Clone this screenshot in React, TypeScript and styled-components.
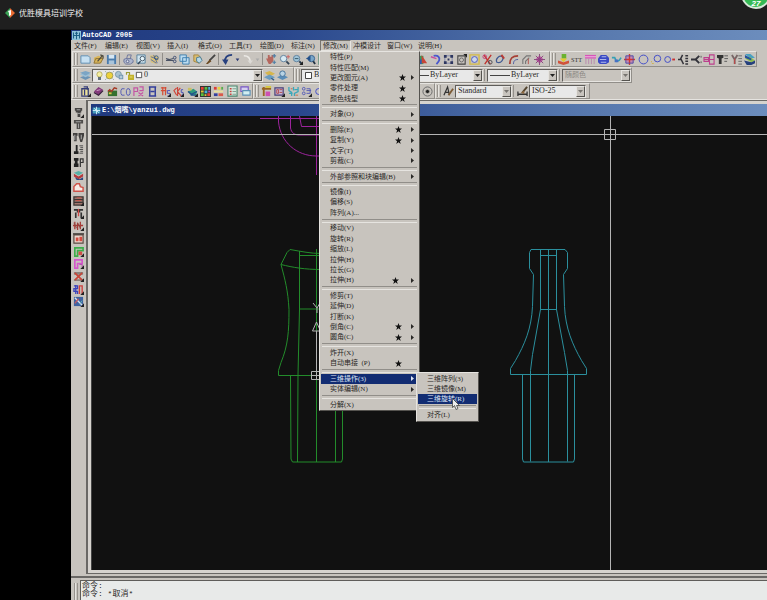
import React from "react";
import styled, { createGlobalStyle, css } from "styled-components";

const face = "#c8c4be";
const shade = "#77746f";
const light = "#e6e4e0";
const navy = "#122c72";
const songti = '"Liberation Serif", "Noto Sans CJK SC", serif';
const fixed = '"Liberation Mono", "Noto Sans CJK SC", monospace';

const GlobalStyle = createGlobalStyle`
  * { box-sizing: border-box; }
  body { margin: 0; background: #000; }
  button, select { font: inherit; color: inherit; border: 0; padding: 0; margin: 0; background: none; border-radius: 0; }
  ul { list-style: none; margin: 0; padding: 0; }
  svg { display: block; flex: none; }
`;

const Page = styled.div`
  display: flex;
  flex-direction: column;
  min-height: 100vh;
  overflow: hidden;
  background: #000;
  color: #2a2826;
  font: 7px/10px ${songti};
`;

const SchoolHeader = styled.header`
  position: relative;
  display: flex;
  align-items: center;
  gap: 4px;
  height: 30px;
  padding: 0 5px 4px;
  background: #1f1f1f;
  border-bottom: 1px solid #141414;
  color: #eee;
  font: 8px/12px "Noto Sans CJK SC", sans-serif;
`;

const Badge = styled.span`
  position: absolute;
  top: -21px;
  right: -4px;
  width: 30px;
  height: 30px;
  padding-top: 19px;
  border: 2px solid #d8e8da;
  border-radius: 50%;
  background: #35b954;
  color: #fff;
  text-align: center;
  font: italic bold 8px/7px "Liberation Sans", sans-serif;
`;

const AppWindow = styled.main`
  flex: 1;
  display: flex;
  flex-direction: column;
  margin-left: 71px;
  background: ${face};
`;

const TitleBar = styled.div<{ $tall?: boolean }>`
  display: flex;
  align-items: center;
  gap: 1px;
  flex: none;
  height: ${(p) => (p.$tall ? 12 : 10)}px;
  padding-left: 1px;
  background: linear-gradient(90deg, #20397e 0%, #29478c 30%, #5475ab 70%, #6c8dbd 100%);
  color: #fff;
  font: bold 7px/10px ${fixed};
  white-space: pre;
`;

const MenuBar = styled.ul`
  display: flex;
  height: 11px;
  padding-left: 1px;
`;

const MenuSlot = styled.li<{ $wide?: boolean }>`
  position: relative;
  width: ${(p) => (p.$wide ? 34 : 31)}px;
`;

const MenuButton = styled.button<{ $open?: boolean }>`
  width: 100%;
  height: 11px;
  padding-left: 1px;
  border: 1px solid transparent;
  text-align: left;
  white-space: nowrap;
  line-height: 10px;
  ${(p) => p.$open && css`border-color: ${shade} ${light} ${light} ${shade}; padding-left: 2px;`}
`;

const Dropdown = styled.ul<{ $sub?: boolean }>`
  position: absolute;
  z-index: 5;
  display: flex;
  flex-direction: column;
  background: ${face};
  color: #2a2826;
  border: 1px solid;
  border-color: ${light} #55534f #55534f ${light};
  ${(p) => p.$sub
    ? css`top: -2px; left: 96px; width: 63px; height: 50px; padding: 1px 0;`
    : css`top: 11px; left: -1px; width: 101px; height: 360px;`}
`;

const ItemSlot = styled.li`
  position: relative;
  flex: 2 1 0;
  min-height: 0;
  display: flex;
`;

const ItemButton = styled.button<{ $active?: boolean; $sub?: boolean }>`
  flex: 1;
  display: flex;
  align-items: center;
  margin: 0 1px;
  padding: 0 3px 0 9px;
  text-align: left;
  white-space: pre;
  line-height: 10px;
  ${(p) => p.$active && css`background: ${navy}; color: #dfe5f5;`}
`;

const ItemLabel = styled.span`
  flex: 1;
`;

const StarSlot = styled.span<{ $gap: number }>`
  margin-right: ${(p) => p.$gap}px;
`;

const ArrowSlot = styled.span`
  width: 4px;
`;

const Divider = styled.li`
  flex: 1 1 0;
  min-height: 0;
  display: flex;
  align-items: center;
  padding: 0 2px;
  &::before {
    content: "";
    flex: 1;
    height: 2px;
    border-top: 1px solid #918e89;
    border-bottom: 1px solid ${light};
  }
`;

const PointerMark = styled.svg`
  position: absolute;
  left: 35px;
  top: 4px;
  z-index: 6;
`;

const ToolRow = styled.div`
  display: flex;
  height: 16px;
  padding-left: 1px;
`;

const ToolBar = styled.div<{ $w?: number }>`
  display: flex;
  align-items: center;
  flex: none;
  ${(p) => p.$w && css`width: ${p.$w}px;`}
  border: 1px solid;
  border-color: ${light} #918e89 #918e89 ${light};
`;

const Grip = styled.span`
  flex: none;
  width: 4px;
  height: 12px;
  margin: 0 1px;
  border: solid #97938d;
  border-width: 0 1px;
  box-shadow: inset 1px 0 ${light};
`;

const Tools = styled.div<{ $spread?: boolean }>`
  flex: 1;
  display: flex;
  align-items: center;
  justify-content: ${(p) => (p.$spread ? "space-between" : "flex-start")};
`;

const ToolButton = styled.button<{ $narrow?: boolean }>`
  flex: none;
  display: flex;
  align-items: center;
  justify-content: center;
  width: ${(p) => (p.$narrow ? 7 : 13)}px;
  height: 12px;
`;

const Rule = styled.span`
  flex: none;
  width: 1px;
  height: 12px;
  margin: 0 2px 0 1px;
  background: #918e89;
`;

const ComboFrame = styled.label<{ $w: number; $off?: boolean }>`
  flex: none;
  display: flex;
  align-items: center;
  gap: 1px;
  width: ${(p) => p.$w}px;
  height: 13px;
  padding-left: 2px;
  border: 1px solid;
  border-color: #5f5d5a ${light} ${light} #5f5d5a;
  background: ${(p) => (p.$off ? face : "#e8e8e8")};
  color: ${(p) => (p.$off ? "#8a8782" : "#2a2826")};
`;

const ComboSelect = styled.select<{ $cjk?: boolean }>`
  flex: 1;
  min-width: 0;
  appearance: none;
  outline: 0;
  opacity: 1;
  font-size: ${(p) => (p.$cjk ? 7 : 8)}px;
  line-height: 10px;
`;

const ComboArrow = styled.span`
  display: flex;
  align-items: center;
  justify-content: center;
  width: 9px;
  height: 11px;
  background: ${face};
  border: 1px solid;
  border-color: ${light} #55534f #55534f ${light};
`;

const Workspace = styled.div`
  flex: 1;
  display: flex;
  border-top: 1px solid ${light};
`;

const SideBar = styled.nav`
  display: flex;
  flex-direction: column;
  align-items: center;
  justify-content: space-between;
  width: 15px;
  height: 202px;
  margin-top: 6px;
`;

const Doc = styled.section`
  flex: 1;
  min-width: 0;
  display: flex;
  flex-direction: column;
  padding: 3px 0 3px 3px;
  border: solid #6a6865;
  border-width: 1px 0 1px 2px;
  background: #d6d3ce;
`;

const Canvas = styled.div`
  flex: 1;
  overflow: hidden;
  background: #111;
  border-left: 1px solid #444;
`;

const Drawing = styled.svg`
  width: 100%;
  height: 100%;
  min-height: 454px;
`;

const CommandDock = styled.footer`
  display: flex;
  height: 25px;
  padding: 2px 0 0 2px;
`;

const CommandGrip = styled(Grip)`
  height: 20px;
  margin: 3px 2px 0 1px;
`;

const DockEdge = styled.div`
  height: 2px;
  margin-top: 2px;
  background: #6a6865;
`;

const CommandLog = styled.pre`
  flex: 1;
  margin: 0;
  padding: 1px 0 0 1px;
  border: solid #5f5d5a;
  border-width: 1px 0 0 1px;
  background: #e8eae9;
  font: 8px/8px ${fixed};
  overflow: hidden;
`;

const S = (d: string, stroke: string, w = 1, fill = "none") => (
  <path d={d} stroke={stroke} strokeWidth={w} fill={fill} />
);
const F = (d: string, fill: string) => <path d={d} fill={fill} />;
const C = (x: number, y: number, r: number, stroke: string, fill = "none") => (
  <circle cx={x} cy={y} r={r} stroke={stroke} fill={fill} />
);
const corner = F("M12 8v4H8z", "#222");

const art: Record<string, React.ReactNode> = {
  cad: <>{F("M0 0h12v12H0z", "#8fc3da")}{S("M2 2v8M2 6h8M10 2v8M6 1v10M4 3h4", "#1b5e84", 1.3)}</>,
  dwg: <>{F("M1 2h10v8H1z", "#49a0bf")}{S("M1 6h10M6 1v10M3 3l6 6", "#d3f1fa", 1.2)}</>,
  fresh: <>{F("M1 2h8l2 2v6H1z", "#c7e1f2")}{S("M1 2h8l2 2v6H1z", "#5b8bb0")}</>,
  open: <>{F("M1 4l5-2 5 2-2 6H1z", "#d9b55a")}{S("M1 10l2-5h8l-3 5z", "#8a7238")}{S("M5 8l5-6M8 1l3 1v3", "#4e4a3c", 1.3)}</>,
  save: <>{F("M1 1h10v10H1z", "#4a7bac")}{F("M3 1h6v4H3z", "#d5e6f3")}{F("M3 7h6v4H3z", "#a9c4da")}</>,
  print: <>{F("M1 5h10v5H1z", "#aeb7ce")}{S("M4 5l1-4h4l-1 4M1 6l2-1h6l2 2v2l-3 2H3L1 9z", "#6a739a")}{C(5, 8, 1.5, "#59628a", "#e2e6f0")}</>,
  preview: <>{F("M1 1h9v9H1z", "#cfe3ee")}{S("M1 1h9v9H1z", "#55809c")}{C(7, 5, 2.5, "#456", "#e5f5fb")}{S("M5 8l-3 3", "#345", 1.5)}</>,
  publish: <>{F("M1 2l5-1 5 4-3 6-6-2z", "#d9c27a")}{S("M2 3l8 3M2 6l6 4M5 1l4 9", "#5b6da0")}{C(8, 4, 2, "#357")}</>,
  cut: <>{S("M0 5l8 2M0 7l8-2", "#4a5264", 1.2)}{C(9.5, 4, 1.5, "#3c4a70")}{C(9.5, 8, 1.5, "#3c4a70")}</>,
  copy: <>{S("M1 1h7v7H1zM4 4h7v7H4z", "#3d7fae", 1, "#bcdcf0")}</>,
  paste: <>{S("M2 1h5l3 4-2 5-6-2z", "#a5853c", 1, "#d9bd73")}{S("M5 4l4-1 2 4-3 3-3-2z", "#4a7b93", 1, "#b7d8e6")}</>,
  brush: <>{S("M11 1L5 7", "#444", 2)}{F("M5 6l2 2-4 3H1z", "#6b4a22")}</>,
  undo: <>{S("M11 1C6 1 3 4 3 9", "#27407f", 2)}{F("M0 6h7l-3 6z", "#27407f")}</>,
  redo: <>{S("M2 2c5 0 7 2 7 7", "#eceae6", 1.6)}{F("M6 7h6l-3 4z", "#dcdad6")}</>,
  drop: F("M4 5h4l-2 3z", "#2c3b74"),
  dropOff: F("M4 5h4l-2 3z", "#aaa"),
  pan: <>{F("M0 5h2V1h2v2h2V1h2v7l-3 3H3z", "#b5675e")}{S("M7 2h4M9 0v4M7 9h4M9 7v4", "#4f7fa5", 1.3)}</>,
  zoomIn: <>{C(5, 5, 3.5, "#5d7f9c", "#d7eaf3")}{S("M8 8l3 3", "#345", 2)}{S("M10 1v4M8 3h4", "#c66")}</>,
  zoomWin: <>{C(5, 5, 3.5, "#5d7f9c", "#9fc4d8")}{S("M8 8l3 3", "#234", 2)}{S("M3 5h4", "#356")}{corner}</>,
  zoomPrev: <>{C(7, 5, 3.5, "#345f8c", "#79a6c8")}{S("M9 8l2 3", "#234", 2)}{F("M6 2v6L1 5z", "#24508a")}</>,
  palette: <>{F("M0 2h7v9H0z", "#3b9c5c")}{F("M5 1l6 9H5z", "#c94437")}{F("M1 6h4v5H1z", "#3655b0")}</>,
  hook: <>{S("M4 2c5-1 7 2 6 5-1 2-2 3-3 4", "#4a58cc", 2)}{S("M1 3l6 2", "#c84d9f", 1.5)}</>,
  dimension: <>{S("M2 2v8M10 2v8M2 2h8M2 10h8", "#7d86ad", 1)}{F("M1 1h3v3H1zM8 1h3v3H8zM1 8h3v3H1zM8 8h3v3H8zM5 5h2v2H5z", "#2d365f")}</>,
  extents: <>{S("M2 2h8v9H2z", "#444", 1.2)}{C(6, 6.5, 2.2, "#666")}{F("M8 0h4v4z", "#222")}</>,
  oval: <>{S("M1 1h10v10H1z", "#d4bb47", 1.5)}{C(6, 6, 3.2, "#4854bd", "#ccd7ed")}</>,
  scissors: <>{S("M2 1l7 10M10 1L3 11", "#c0342f", 1.5)}{C(3, 3, 2, "#c83d7c")}{C(9, 9, 2, "#4a4a50")}</>,
  ring: <>{S("M2 9c-2-4 3-8 6-6 2 2-1 8-6 6z", "#405a93", 1.3)}{S("M7 1l3 4", "#b93c35", 2)}</>,
  fillet: <>{S("M2 11C2 5 4 2 11 2", "#a64036", 2)}{S("M6 11c0-3 1-5 5-5", "#4657a0")}</>,
  chamfer: <>{S("M2 11V6l4-4h5M5 11V8l4-4", "#777", 1.2)}{S("M8 5v6", "#b6524b")}</>,
  burst: <>{C(6, 6, 3, "#a9398f", "#d873bd")}{S("M6 0v12M0 6h12M2 2l8 8M10 2l-8 8", "#8a437c", 1)}</>,
  stamp: <>{F("M4 0h5v5H4z", "#6ab22e")}{F("M0 7l6 2 6-2v3l-6 2-6-2z", "#d1533b")}{F("M2 5h8L6 9z", "#e5c931")}</>,
  stt: <text x="0" y="9" fontSize="8" fontFamily="Liberation Serif" fill="#333">STT</text>,
  comb: <>{F("M0 1h12v4H0z", "#d656b8")}{S("M1 5v6M4 5v6M7 5v6M10 5v6", "#b98aae")}{S("M0 3h12", "#f2c2e6")}</>,
  plot: <>{F("M0 5l3-4h6l3 3v5l-3 2H2L0 9z", "#3a49c4")}{S("M4 3h5M2 6h7M3 9h6", "#b9c3ef")}</>,
  link: <>{S("M1 4h3l2 4 3-1 2-3", "#35a0b5", 1.8)}{F("M4 6h4v3H4z", "#4671c4")}</>,
  target: <>{F("M2 2h8v8H2z", "#c08ab5")}{S("M0 6h12M6 0v12", "#d5352d", 1.5)}{S("M2 2h8v8H2z", "#4c46a5")}</>,
  circleBig: C(6, 6, 4.8, "#3b46c9"),
  circleDot: <>{C(7, 5, 3.6, "#3b46c9")}{F("M0 8h1v1H0zM1 10h2v1H1z", "#d3ad31")}</>,
  circleLink: <>{C(4, 6, 3.2, "#3b46c9")}{F("M9 5h3v2H9z", "#c92f2f")}</>,
  branch: <>{S("M5 1L3 5l3 6M0 6h4M8 2h3M8 5h3M8 8h3M8 11h3", "#35343b", 1.6)}</>,
  fork: <>{S("M0 6h5l4-4M5 6l4 4", "#33333b", 2)}{S("M11 2v2M11 8v2", "#555")}</>,
  flange: <>{S("M0 4h5v4H0zM6 1h5v10H6zM6 6h5M0 6h5", "#bd3f8d", 1.2)}</>,
  punch: <>{F("M0 1h7v3L5 5v6H2V5L0 4z", "#333")}{S("M8 2h4M8 5h4M8 8h3", "#555")}</>,
  die: <>{S("M1 1l3 5v5M7 1L4 6", "#766", 2)}{S("M8 2h4M8 5h4M8 8h4M8 11h4", "#666")}{S("M4 5v6", "#c44")}</>,
  layersBlue: <>{F("M1 0h6l5 4-5 1z", "#4aa0c0")}{F("M1 5l5-2 6 4-4 2z", "#8fbf4a")}{F("M0 7l8 2 4-2v3l-4 2H3z", "#25407c")}{F("M1 1l7 4v2L1 4z", "#25519c")}</>,
  layers: <>{F("M0 8l6-2 6 2-6 3z", "#6c94b5")}{F("M0 5l6-2 6 2-6 3z", "#9cbfd5")}{F("M0 3l6-2 6 2-6 3z", "#7ba5c5")}</>,
  layerBack: <>{F("M1 3l5-2 6 3-6 3z", "#d6b54b")}{F("M0 8l6-3 6 3-6 3z", "#6b9bbf")}{S("M8 9l3 2", "#2b5c8b", 1.5)}</>,
  layerSet: <>{F("M0 8l6-3 6 3-6 3z", "#5a8db8")}{C(6, 4, 3, "#406f98", "#b8d3e4")}</>,
  bulb: <>{C(6, 4.5, 3.5, "#aaa04e", "#f5efa1")}{F("M4 8h4v4H4z", "#66727b")}</>,
  sun: <>{C(6, 6, 4.5, "#8f8f4e", "#edd13c")}{S("M0 0l2 2M12 12l-2-2M0 12l2-2M12 0l-2 2", "#8fa1a1")}</>,
  freeze: <>{C(4.5, 4.5, 4, "#68899d", "#a9c3ce")}{F("M5 5h6v6H5z", "#7195b0")}{S("M6 8h4M8 6v4", "#e2eff4")}</>,
  lock: <>{S("M2 5V2h4v4", "#9b9b39", 1.6)}{F("M4 5h8v7H4z", "#c1b12b")}{S("M6 8h4", "#f5ef90")}</>,
  square: S("M2 2h8v8H2z", "#333", 1.2, "#fff"),
  box: <>{F("M1 2h9v9H1z", "#ece19a")}{S("M2 3h7v8H2zM4 1h4v3M5 4v6", "#343c79", 1.4)}{corner}</>,
  book: <>{F("M1 6l5-5 5 3-5 6z", "#833a7b")}{S("M1 7l5 3 5-5", "#361d3a", 1.3)}{S("M4 5l4-1", "#d8a6cf")}</>,
  chart: <>{F("M1 5h10v6H1z", "#35702e")}{S("M1 6l2-2 2 2 3-4 3 1", "#a43a26", 1.6)}{F("M2 7h3v2H2z", "#ddbf44")}</>,
  co: <>{S("M5 3H2L1 5v3l1 2h3", "#5058b5")}{S("M8 3h2l1 2v3l-1 2H8L7 8V5z", "#5058b5")}</>,
  pattern: <>{S("M1 11V2h4v4H1M7 1h4v4H7M6 7l5 4M11 7l-5 4", "#c455a4", 1.3)}</>,
  column: <>{S("M3 1h6v10H3zM2 1h8M2 11h8M4 6h4", "#333e9a", 1.6)}</>,
  wave: <>{S("M1 2h6M1 5h6M3 1v9M6 1v9", "#d44d35", 1.3)}{S("M11 5H8v3h3v3H8", "#454ab6")}{corner}</>,
  cks: <>{S("M4 2L1 5l3 5M5 1v10M8 2L5 6l4 5", "#cd4438", 1.2)}{S("M11 4H9v3h2v3H9", "#484fb8")}{corner}</>,
  teapot: <>{F("M1 6l6-3 4 3-1 4H4z", "#2f9a7d")}{S("M1 6l4 3 6-3M4 10h7", "#234f8b", 1.5)}{F("M1 2h4v3H1z", "#c9bf62")}{corner}</>,
  swatches: <>{F("M0 0h12v12H0z", "#333")}{F("M1 1h3v3H1zM8 8h3v3H8z", "#e34136")}{F("M5 1h3v3H5zM1 8h3v3H1z", "#58bd3e")}{F("M9 1h2v3H9zM5 5h3v3H5z", "#43b6d9")}{F("M1 5h3v2H1zM5 9h2v2H5z", "#e4c438")}{F("M9 5h2v2H9z", "#b448bc")}</>,
  stripes: <>{F("M1 1h3v3H1z", "#db3c38")}{F("M5 1h3v3H5z", "#e6d13d")}{F("M9 1h2v3H9z", "#57ae4a")}{F("M1 5h10v2H1z", "#e8df9a")}{F("M1 8h4v3H1z", "#333f9d")}{F("M6 8h5v3H6z", "#d95a4a")}</>,
  list: <>{S("M1 0h10v11H1z", "#4c8670", 1.2, "#d7e8dd")}{S("M3 3h2M3 6h2M3 9h2", "#c54141", 1.5)}{S("M6 3h4M6 6h4M6 9h4", "#7a9a8c")}</>,
  cards: <>{S("M1 1h8v5H1z", "#7755c3", 1.2, "#d5cfee")}{S("M3 5h8v5H3z", "#5a8fb5", 1.2, "#d2eef1")}</>,
  frame: <>{S("M1 3h10M3 1v10", "#986422", 2)}{F("M5 6h5v5H5z", "#ce50b3")}{F("M5 0h6v2H5z", "#d8c83c")}</>,
  panel: <>{S("M1 2h9v8H1z", "#4a3f77", 1.3, "#c8b7d7")}{S("M3 4h2v4H3zM6 4h3M6 7h3", "#b14747")}{corner}</>,
  net: <>{S("M1 1v4l3 2v4M6 1v4M11 1v5L7 8v3M1 8h4M7 4h4", "#3ba7ba", 1.4)}{S("M3 3h2M8 10h3", "#c46a47")}</>,
  nodes: <>{C(3, 3, 1.5, "#5158b7")}{C(3, 8, 1.5, "#5158b7")}{S("M6 3h4v5H6M6 5h5", "#5158b7")}{corner}</>,
  dot: <>{C(6, 6, 5, "#666")}{F("M5 4h2v1h1v2H7v1H5V7H4V5h1z", "#222")}</>,
  font: <>{S("M1 10L5 1l2 9M3 7h4", "#333", 1.3)}{S("M11 3L6 10", "#7c5b36", 2)}</>,
  dimBrush: <>{S("M1 11V6M11 11V6M1 9h10", "#333", 1.4)}{S("M11 1L6 7", "#51432e", 2)}{F("M4 7l4-2v4z", "#8b6841")}</>,
  bolt: <>{F("M2 1h8v3H9v2H8v5H5V6H3V4H2z", "#454342")}{S("M4 3h4M5 7h3", "#aaa")}{corner}</>,
  pin: <>{F("M1 1h10v4H8v6H4V5H1z", "#4e4c4a")}{S("M3 3h6M6 5v5", "#aaa")}</>,
  twin: <>{F("M0 1h5v3H4v6H1V4H0zM6 1h6v3l-2 7H8L6 4z", "#42403f")}{S("M2 3v6M9 3v5", "#bbb")}</>,
  gauge: <>{F("M3 1h2v7h1v3H1V8h2z", "#222")}{S("M7 2h4M8 4h3M7 6h4M8 8h3M7 10h4", "#444")}</>,
  part: <>{F("M1 1h5v3H5v3h1v4H1V7h1V4H1z", "#222")}{S("M8 11V2h3v4H8", "#333", 1.3)}</>,
  solid: <>{F("M1 3l5-2 5 2-5 3z", "#56b1a8")}{F("M1 4l5 3 5-3v3L6 10 1 7z", "#b4393d")}{F("M2 8l5 2 4-2v3H4z", "#2b477f")}</>,
  plate: <>{S("M1 10V5l3-3h3l1 3 3 1v4z", "#cd5349", 1.6, "#f6ebe6")}</>,
  grid: <>{S("M1 2h10v9H1zM1 5h10M1 8h10", "#3d3633", 1.4, "#9f756d")}{S("M3 6h6M4 3h5", "#c65548")}{corner}</>,
  tool: <>{S("M1 2h4v3M11 2H7v3M3 5v6M9 5v6", "#333", 1.8)}{S("M6 1v8", "#cf4945", 1.4)}{corner}</>,
  springs: <>{S("M2 2v8M5 3v8M8 2v8M0 6h11", "#a63b36", 1.4)}{S("M1 3l3 6M5 3l3 6", "#8a4a44")}{corner}</>,
  strip: <>{S("M1 2h10v9H1z", "#5a4a42", 1.3, "#ecd8d0")}{S("M0 1h12", "#3a3531", 1.5)}{F("M3 5h3v4H3zM7 4h3v5H7z", "#d64b40")}</>,
  greenPart: <>{S("M2 11V2h9v3H5v6z", "#3cae4a", 1.8)}{F("M6 6h4v4H6z", "#ce5149")}{corner}</>,
  pinkPart: <>{S("M2 11V2h8v4H5v5z", "#d456cc", 1.8)}{S("M7 7h3v3", "#b243ab")}{corner}</>,
  cross: <>{F("M1 1h10v3H1zM1 9h10v2H1z", "#8b817b")}{S("M2 2l8 8M10 2l-8 8", "#c74437", 1.8)}{corner}</>,
  piping: <>{S("M1 2h4v3H1v3h4v3M3 1v10", "#3b43bb", 1.4)}{S("M7 11V2h3v9", "#cd413d", 1.5)}{corner}</>,
  slab: <>{F("M1 1h10v10H1z", "#3f62a0")}{S("M2 2l8 8", "#d8e2ee", 1.5)}{S("M2 8l4-5", "#bb5965", 1.5)}{S("M7 9l3-4", "#5fb3b8")}{corner}</>,
};

const Icon = ({ name, w = 11 }: { name: string; w?: number }) => (
  <svg width={w} height={w} viewBox={name === "stt" ? "0 0 14 12" : "0 0 12 12"} fill="none" overflow="visible" aria-hidden="true">
    {art[name]}
  </svg>
);

/* "|" draws a rule between groups of buttons */
const ToolSet = ({ names }: { names: string }) => (
  <>
    {names.split(" ").map((n, i) =>
      n === "|" ? <Rule key={i} /> : (
        <ToolButton key={i} type="button" aria-label={n} $narrow={n.startsWith("drop")}>
          <Icon name={n} />
        </ToolButton>
      )
    )}
  </>
);

type ComboProps = { label: string; value: string; w: number; off?: boolean; pale?: boolean; children?: React.ReactNode };
const Combo = ({ label, value, w, off, pale, children }: ComboProps) => (
  <ComboFrame $w={w} $off={off}>
    {children}
    <ComboSelect aria-label={label} disabled={off} $cjk={off} defaultValue={value}>
      <option>{value}</option>
    </ComboSelect>
    <ComboArrow>
      <svg width="5" height="3" viewBox="0 0 5 3"><path d="M0 0h5L2.5 3z" fill={off || pale ? "#77746f" : "#222"} /></svg>
    </ComboArrow>
  </ComboFrame>
);

const LineSample = ({ w }: { w: number }) => (
  <svg width={w} height="3"><path d={`M0 1.5h${w}`} stroke="#444" /></svg>
);

type Item = { t: string; star?: number; more?: boolean; on?: boolean; sub?: Item[][] };
const modify: Item[][] = [
  [{ t: "特性(P)" }, { t: "特性匹配(M)" }, { t: "更改图元(A)", star: 5, more: true }, { t: "零件处理", star: 5 }, { t: "颜色线型", star: 5 }],
  [{ t: "对象(O)", more: true }],
  [{ t: "删除(E)", star: 9, more: true }, { t: "复制(Y)", star: 9, more: true }, { t: "文字(T)", more: true }, { t: "剪裁(C)", more: true }],
  [{ t: "外部参照和块编辑(B)", more: true }],
  [{ t: "镜像(I)" }, { t: "偏移(S)" }, { t: "阵列(A)..." }],
  [{ t: "移动(V)" }, { t: "旋转(R)" }, { t: "缩放(L)" }, { t: "拉伸(H)" }, { t: "拉长(G)" }, { t: "拉伸(H)", star: 12, more: true }],
  [{ t: "修剪(T)" }, { t: "延伸(D)" }, { t: "打断(K)" }, { t: "倒角(C)", star: 9, more: true }, { t: "圆角(C)", star: 9, more: true }],
  [{ t: "炸开(X)" }, { t: "自动串接  (P)", star: 9 }],
  [
    { t: "三维操作(3)", more: true, on: true, sub: [[{ t: "三维阵列(3)" }, { t: "三维镜像(M)" }, { t: "三维旋转(R)", on: true }], [{ t: "对齐(L)" }]] },
    { t: "实体编辑(N)", more: true },
  ],
  [{ t: "分解(X)" }],
];

const Menu = ({ groups, sub }: { groups: Item[][]; sub?: boolean }) => (
  <Dropdown $sub={sub} role="menu">
    {groups.map((group, g) => (
      <React.Fragment key={g}>
        {g > 0 && <Divider role="separator" />}
        {group.map((it, i) => (
          <ItemSlot key={i} role="none">
            <ItemButton type="button" role="menuitem" $active={it.on} $sub={sub}>
              <ItemLabel>{it.t}</ItemLabel>
              {it.star && (
                <StarSlot $gap={it.star}>
                  <svg width="7" height="7" viewBox="0 0 10 10"><path d="M5 0l1.3 3.6H10L7 6l1.2 4L5 7.6 1.8 10 3 6 0 3.6h3.7z" fill="#111" /></svg>
                </StarSlot>
              )}
              {!sub && (
                <ArrowSlot>
                  {it.more && <svg width="3" height="5" viewBox="0 0 3 5"><path d="M0 0l3 2.5L0 5z" fill="currentColor" /></svg>}
                </ArrowSlot>
              )}
            </ItemButton>
            {it.sub && <Menu groups={it.sub} sub />}
            {sub && it.on && (
              <PointerMark width="8" height="12" viewBox="0 0 8 12">
                <path d="M.5.5v9l2-2 1.5 4 2-1-1.5-3h3z" fill="#eee" stroke="#333" strokeWidth=".7" />
              </PointerMark>
            )}
          </ItemSlot>
        ))}
      </React.Fragment>
    ))}
  </Dropdown>
);

const menus = ["文件(F)", "编辑(E)", "视图(V)", "插入(I)", "格式(O)", "工具(T)", "绘图(D)", "标注(N)", "修改(M)", "冲模设计", "窗口(W)", "说明(H)"];
const sideTools = "bolt pin twin gauge part solid plate grid tool springs strip greenPart pinkPart cross piping slab";

const Model = () => (
  <Drawing aria-label="yanzui.dwg" role="img">
    <g transform="translate(-92 -116)" fill="none" strokeWidth="1">
      <g stroke="#9c249c">
        <path d="M260 118.5h90M278.500 116v6c2 20 18 34 38 34h10M290.500 116v12c1 5 4 7 9 7h20M299.500 116l2 10.500h20M316.500 116v59" />
      </g>
      <g stroke="#238c2b">
        <path d="M322 253.500c-12 0-20-2-32-4l-3 3-6 12c12 3 24 5 40 5M281 264.500c4 15 7 26 8 45 0 22-1 36-8 53l-2.500 8v5H340" />
        <path d="M299.500 251v58l-1.500 66-.5 87M299 255.500h22M299 309h22M316.500 249v213M290.500 375l.5 84 1.500 3h49l1-3v-84M335.500 375v87" />
      </g>
      <g stroke="#2b8f9d">
        <path d="M531 249.500h34l2.500 3v16l-4 6 1 32c1 22 8 38 17 54l5 8v6h-76v-6l5-8c9-16 16-32 17-54l1-32-4-6v-16z" />
        <path d="M540.500 249.500v60l-8 45-2 16v91M556.500 249.500v60l8 43 3 18v91M548.500 249v213M540 255.500h17M540 309.500h17M522.500 375v84l1 3h50l1-3v-84" />
      </g>
      <g stroke="#b4b4b4">
        <path d="M92 134.500h512M616 134.500h3000M610.500 116v13M610.500 140v3000M604.500 129.500h11v10h-11zM610.500 129v11M604 134.500h12" />
        <path d="M316.500 322l-4 9h8zM316.500 331v40M311.500 371.500h9v8h-9zM311 375.500h10M316.500 371v9M313 303l4 5v5M320 303l-3 5" />
      </g>
    </g>
  </Drawing>
);

export default function App() {
  return (
    <Page>
      <GlobalStyle />
      <SchoolHeader>
        <svg width="10" height="10" viewBox="0 0 10 10">
          <path d="M5 0v10L0 5z" fill="#3aa356" />
          <path d="M5 0l5 5-5 5z" fill="#e86b32" />
          <path d="M3 3l3-1v5L4 8V5z" fill="#fff" />
        </svg>
        优胜模具培训学校
        <Badge>27</Badge>
      </SchoolHeader>
      <AppWindow>
        <TitleBar><Icon name="cad" w={9} />AutoCAD 2005</TitleBar>
        <MenuBar role="menubar">
          {menus.map((m) => (
            <MenuSlot key={m} $wide={m === "冲模设计"} role="none">
              <MenuButton type="button" role="menuitem" $open={m === "修改(M)"}>{m}</MenuButton>
              {m === "修改(M)" && <Menu groups={modify} />}
            </MenuSlot>
          ))}
        </MenuBar>

        <ToolRow>
          <ToolBar $w={285}>
            <Grip />
            <Tools><ToolSet names="fresh open save | print preview publish | cut copy paste brush | undo drop redo dropOff | pan zoomIn zoomWin zoomPrev list cards" /></Tools>
          </ToolBar>
          <ToolBar $w={193}>
            <Grip />
            <Tools><ToolSet names="brush copy cut paste palette hook dimension extents oval scissors ring fillet chamfer burst" /></Tools>
          </ToolBar>
          <ToolBar $w={207}>
            <Grip />
            <Tools $spread><ToolSet names="stamp stt comb plot link target circleBig circleDot circleLink branch fork flange punch die layersBlue" /></Tools>
          </ToolBar>
        </ToolRow>

        <ToolRow>
          <ToolBar $w={222}>
            <Grip />
            <ToolSet names="layers" />
            <Combo label="图层" value="0" w={171}>
              <Icon name="bulb" w={9} /><Icon name="sun" w={9} /><Icon name="freeze" w={9} /><Icon name="lock" w={9} /><Icon name="square" w={8} />
            </Combo>
            <ToolSet names="layerBack layerSet" />
          </ToolBar>
          <ToolBar $w={338}>
            <Grip />
            <Combo label="颜色" value="ByLayer" w={100}><Icon name="square" w={9} /></Combo>
            <Rule />
            <Combo label="线型" value="ByLayer" w={78}><LineSample w={21} /></Combo>
            <Rule />
            <Combo label="线宽" value="ByLayer" w={71}><LineSample w={20} /></Combo>
            <Rule />
            <Combo label="打印样式" value="随颜色" w={69} off />
          </ToolBar>
        </ToolRow>

        <ToolRow>
          <ToolBar $w={181}>
            <Grip />
            <Tools $spread><ToolSet names="box book chart co pattern column wave cks teapot swatches stripes list cards" /></Tools>
          </ToolBar>
          <ToolBar $w={182}>
            <Grip />
            <Tools $spread><ToolSet names="frame panel net nodes circleLink circleBig fillet chamfer extents cut copy paste dot" /></Tools>
          </ToolBar>
          <ToolBar $w={155}>
            <Grip />
            <ToolSet names="font" />
            <Combo label="文字样式" value="Standard" w={57} pale />
            <Rule />
            <ToolSet names="dimBrush" />
            <Combo label="标注样式" value="ISO-25" w={57} pale />
          </ToolBar>
        </ToolRow>

        <Workspace>
          <SideBar aria-label="冲模设计"><ToolSet names={sideTools} /></SideBar>
          <Doc>
            <TitleBar $tall><Icon name="dwg" w={9} />{"E:\\烟嘴\\yanzui.dwg"}</TitleBar>
            <Canvas><Model /></Canvas>
          </Doc>
        </Workspace>
        <DockEdge />
        <CommandDock>
          <CommandGrip />
          <CommandLog>{"命令:\n命令: *取消*"}</CommandLog>
        </CommandDock>
      </AppWindow>
    </Page>
  );
}
